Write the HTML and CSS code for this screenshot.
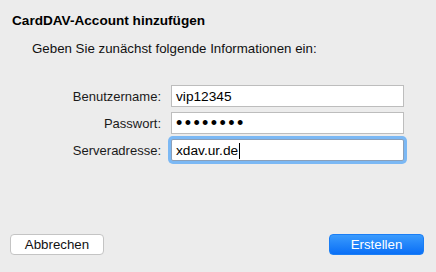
FILE: index.html
```html
<!DOCTYPE html>
<html lang="de">
<head>
<meta charset="utf-8">
<title>CardDAV-Account hinzufügen</title>
<link rel="stylesheet" href="styles.css">
</head>
<body>
<div class="sheet">
  <h1 class="title">CardDAV-Account hinzufügen</h1>
  <p class="intro">Geben Sie zunächst folgende Informationen ein:</p>
  <div class="form">
    <label class="label">Benutzername:</label>
    <div class="field">vip12345</div>
    <label class="label">Passwort:</label>
    <div class="field dots">••••••••</div>
    <label class="label">Serveradresse:</label>
    <div class="field focused">xdav.ur.de<span class="caret"></span></div>
  </div>
  <div class="footer">
    <button class="btn">Abbrechen</button>
    <button class="btn primary">Erstellen</button>
  </div>
</div>
</body>
</html>
```
FILE: styles.css
```css
html, body {
  margin: 0;
  padding: 0;
}
body {
  width: 436px;
  height: 272px;
  background: #ececec;
  font-family: "Liberation Sans", Arial, sans-serif;
  font-size: 13px;
  color: #111;
  overflow: hidden;
}
.sheet {
  height: 272px;
  box-sizing: border-box;
  display: flex;
  flex-direction: column;
  padding: 13px 0 17px 0;
}
.title {
  margin: 0 0 0 12px;
  font-size: 13.6px;
  line-height: 16px;
  font-weight: bold;
  color: #000;
}
.intro {
  margin: 12px 0 0 32px;
  font-size: 13.3px;
  line-height: 16px;
}
.form {
  margin-top: 28px;
  display: grid;
  grid-template-columns: 161px 233px;
  grid-auto-rows: 22px;
  column-gap: 10px;
  row-gap: 5px;
}
.label {
  text-align: right;
  line-height: 22px;
  padding-top: 1px;
  color: #1a1a1a;
}
.field {
  box-sizing: border-box;
  height: 22px;
  border: 1px solid #bdbdbd;
  background: #fff;
  padding: 1px 0 0 4px;
  line-height: 19px;
  font-size: 13.7px;
  color: #000;
  display: flex;
  align-items: center;
}
.dots {
  font-size: 18px;
  letter-spacing: 2.4px;
  padding-left: 4px;
}
.focused {
  border-color: #8a9fb8;
  box-shadow: 0 0 0 3px #7bb8f4;
  border-radius: 2px;
}
.caret {
  display: inline-block;
  width: 1px;
  height: 16px;
  background: #000;
  margin-left: 1px;
}
.footer {
  margin-top: auto;
  display: flex;
  justify-content: space-between;
  padding: 0 12px 0 10px;
}
.btn {
  box-sizing: border-box;
  height: 21px;
  width: 94px;
  border: 1px solid #c4c4c4;
  border-radius: 4px;
  background: #fff;
  font-family: "Liberation Sans", Arial, sans-serif;
  font-size: 13.3px;
  color: #111;
  padding: 0;
  line-height: 19px;
}
.primary {
  width: 95px;
  border-color: #1a7ef5;
  background: linear-gradient(#3a9bfd, #0a6ff6);
  color: #fff;
}
```
